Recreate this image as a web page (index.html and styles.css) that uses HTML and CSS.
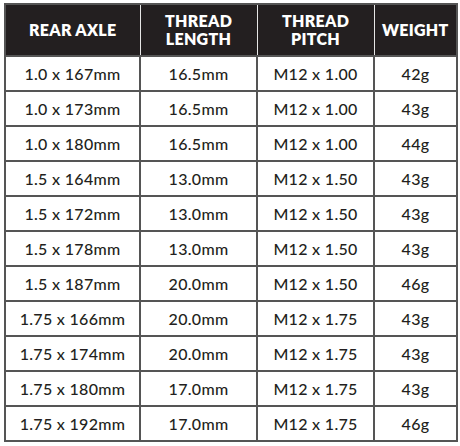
FILE: index.html
```html
<!DOCTYPE html>
<html>
<head>
<meta charset="utf-8">
<link rel="stylesheet" href="styles.css">
</head>
<body>
<table class="spec">
  <colgroup>
    <col class="c1"><col class="c2"><col class="c3"><col class="c4">
  </colgroup>
  <thead>
    <tr><th>REAR AXLE</th><th>THREAD<br>LENGTH</th><th>THREAD<br>PITCH</th><th>WEIGHT</th></tr>
  </thead>
  <tbody>
    <tr><td>1.0 x 167mm</td><td>16.5mm</td><td>M12 x 1.00</td><td>42g</td></tr>
    <tr><td>1.0 x 173mm</td><td>16.5mm</td><td>M12 x 1.00</td><td>43g</td></tr>
    <tr><td>1.0 x 180mm</td><td>16.5mm</td><td>M12 x 1.00</td><td>44g</td></tr>
    <tr><td>1.5 x 164mm</td><td>13.0mm</td><td>M12 x 1.50</td><td>43g</td></tr>
    <tr><td>1.5 x 172mm</td><td>13.0mm</td><td>M12 x 1.50</td><td>43g</td></tr>
    <tr><td>1.5 x 178mm</td><td>13.0mm</td><td>M12 x 1.50</td><td>43g</td></tr>
    <tr><td>1.5 x 187mm</td><td>20.0mm</td><td>M12 x 1.50</td><td>46g</td></tr>
    <tr><td>1.75 x 166mm</td><td>20.0mm</td><td>M12 x 1.75</td><td>43g</td></tr>
    <tr><td>1.75 x 174mm</td><td>20.0mm</td><td>M12 x 1.75</td><td>43g</td></tr>
    <tr><td>1.75 x 180mm</td><td>17.0mm</td><td>M12 x 1.75</td><td>43g</td></tr>
    <tr><td>1.75 x 192mm</td><td>17.0mm</td><td>M12 x 1.75</td><td>46g</td></tr>
  </tbody>
</table>
</body>
</html>
```
FILE: styles.css
```css
html, body {
  margin: 0;
  padding: 0;
  background: #ffffff;
}
body {
  padding: 3px 0 0 4px;
  font-family: Lato, "Open Sans", sans-serif;
  color: #231f20;
}
.spec {
  border-collapse: collapse;
  table-layout: fixed;
  width: 452px;
}
.c1 { width: 135px; }
.c2 { width: 117px; }
.c3 { width: 117px; }
.c4 { width: 83px; }
.spec th {
  background: #231f20;
  color: #ffffff;
  font-weight: 800;
  font-size: 16px;
  line-height: 18px;
  letter-spacing: 0.3px;
  height: 50px;
  padding: 0;
  border-top: 2px solid #555;
  border-bottom: 2px solid #555;
  border-left: 1px solid #e6e6e6;
  border-right: 1px solid #e6e6e6;
  text-align: center;
  vertical-align: middle;
}
.spec th:first-child { border-left: 2px solid #555; }
.spec th:last-child { border-right: 2px solid #555; }
.spec td {
  font-size: 16px;
  font-weight: 500;
  height: 33px;
  padding: 0;
  border: 2px solid #555;
  text-align: center;
  vertical-align: middle;
  letter-spacing: 0.3px;
}
```
